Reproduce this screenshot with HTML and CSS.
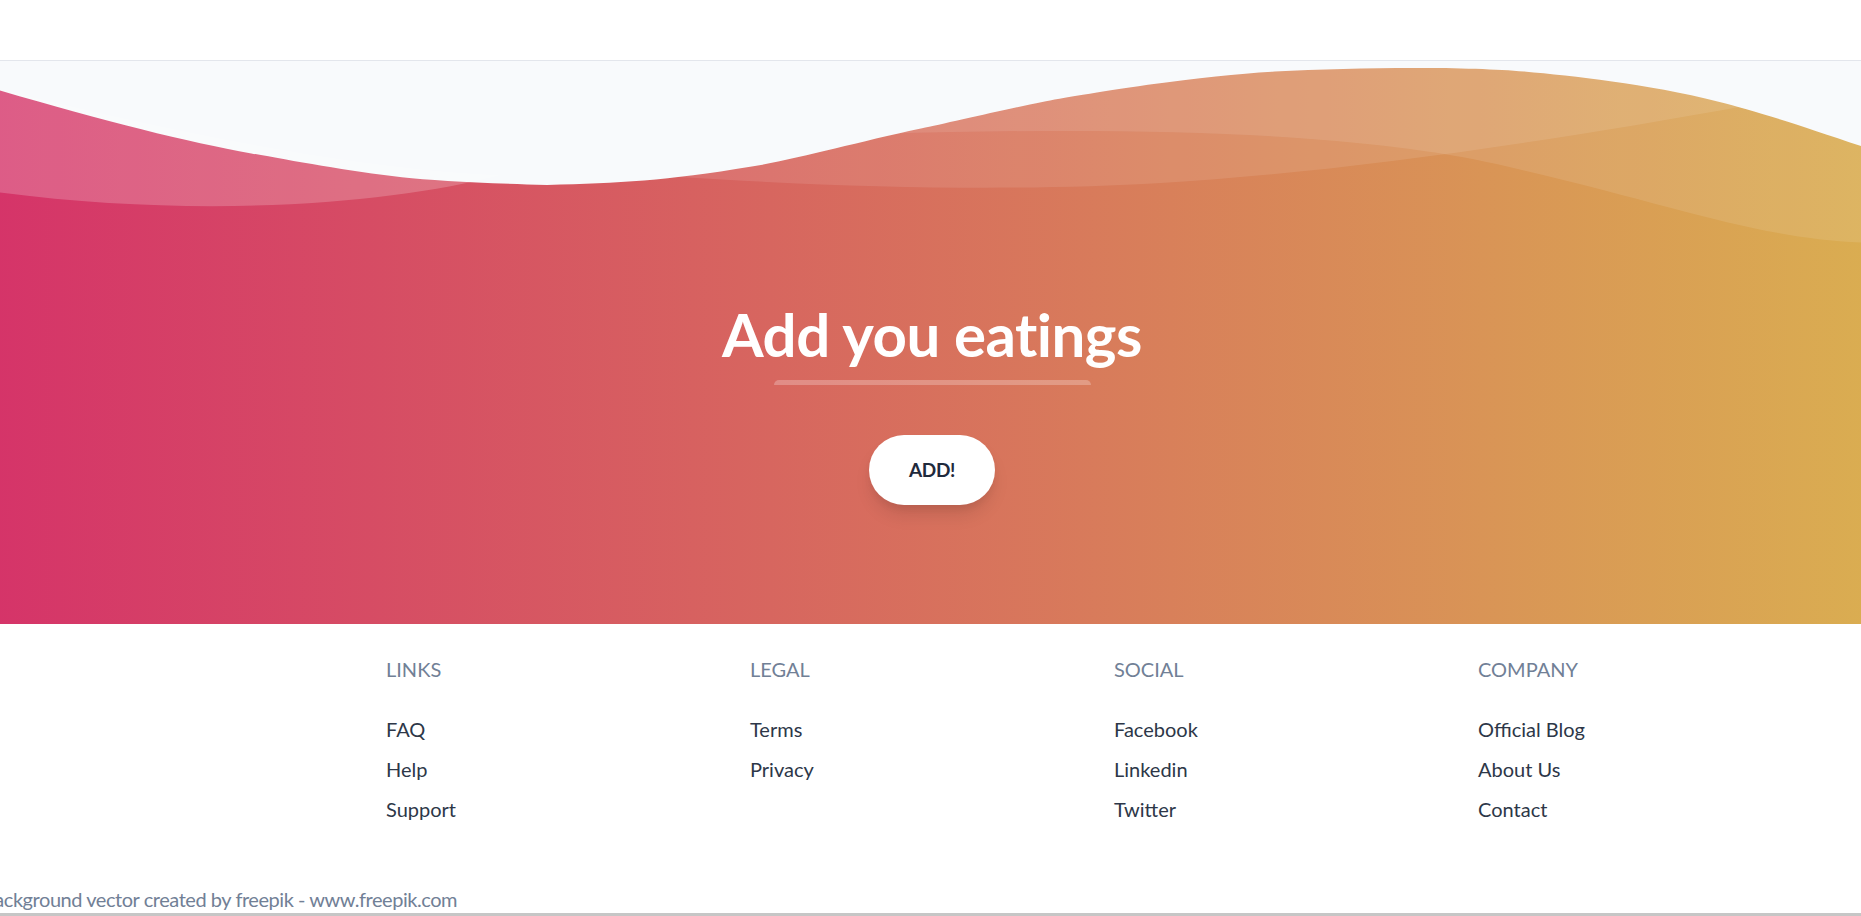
FILE: index.html
```html
<!DOCTYPE html>
<html lang="en">
<head>
<meta charset="utf-8">
<title>Add you eatings</title>
<link rel="stylesheet" href="styles.css">
</head>
<body>
<div class="page">
  <header class="nav"></header>
  <main class="cta-area">
    <svg class="wave" viewBox="0 0 1439 147" preserveAspectRatio="none" xmlns="http://www.w3.org/2000/svg">
      <g stroke="none" stroke-width="1" fill="none" fill-rule="evenodd">
        <g transform="translate(-1, -14)" fill-rule="nonzero">
          <g fill="#f8fafc">
            <path d="M1440,84 C1383.555,64.3 1342.555,51.3 1317,45 C1259.5,30.824 1206.707,25.526 1169,22 C1129.711,18.326 1044.426,18.475 980,22 C954.25,23.409 922.25,26.742 884,32 C845.122,37.787 818.455,42.121 804,45 C776.833,50.41 728.136,61.77 713,65 C660.023,76.309 621.544,87.729 584,94 C517.525,105.104 484.525,106.438 429,108 C379.49,106.484 342.823,104.484 319,102 C278.571,97.783 231.737,88.736 205,84 C154.629,75.076 86.296,57.743 0,32 L0,0 L1440,0 L1440,84 Z"/>
          </g>
          <g transform="translate(1, 15)" fill="#FFFFFF">
            <g transform="translate(719.5, 68.5) rotate(-180) translate(-719.5, -68.5)">
              <path d="M0,0 C90.7283404,0.927527913 147.912752,27.187927 291.910178,59.9119003 C387.908462,81.7278826 543.605069,89.334785 759,82.7326078 C469.336065,156.254352 216.336065,153.6679 0,75 L0,0 Z" opacity="0.1"/>
              <path d="M100,104.708498 C277.413333,72.2345949 426.147877,52.5246657 546.203633,45.5787101 C666.259389,38.6327546 810.524845,41.7979068 979,55.0741668 C931.069965,56.122511 810.303266,74.8455141 616.699903,111.243748 C423.096539,147.641981 250.863238,145.463483 100,104.708498 Z" opacity="0.1"/>
              <path d="M1046,51.6521276 C1130.83045,29.328812 1279.08318,17.607883 1439,40.1656806 L1439,120 C1271.17211,77.9435312 1140.17211,55.1609071 1046,51.6521276 Z" opacity="0.2"/>
            </g>
          </g>
        </g>
      </g>
    </svg>
    <section class="cta">
      <h1 class="cta-title">Add you eatings</h1>
      <div class="cta-bar"></div>
      <button class="cta-btn" type="button">ADD!</button>
    </section>
  </main>
  <footer class="footer">
    <div class="footer-inner">
      <div class="col"></div>
      <div class="col">
        <p class="col-title">Links</p>
        <ul class="col-list">
          <li><a href="#">FAQ</a></li>
          <li><a href="#">Help</a></li>
          <li><a href="#">Support</a></li>
        </ul>
      </div>
      <div class="col">
        <p class="col-title">Legal</p>
        <ul class="col-list">
          <li><a href="#">Terms</a></li>
          <li><a href="#">Privacy</a></li>
        </ul>
      </div>
      <div class="col">
        <p class="col-title">Social</p>
        <ul class="col-list">
          <li><a href="#">Facebook</a></li>
          <li><a href="#">Linkedin</a></li>
          <li><a href="#">Twitter</a></li>
        </ul>
      </div>
      <div class="col">
        <p class="col-title">Company</p>
        <ul class="col-list">
          <li><a href="#">Official Blog</a></li>
          <li><a href="#">About Us</a></li>
          <li><a href="#">Contact</a></li>
        </ul>
      </div>
    </div>
  </footer>
  <div class="credit"><a href="#">Background vector created by freepik - www.freepik.com</a></div>
  <div class="hbar"></div>
</div>
</body>
</html>
```

FILE: styles.css
```css
html, body {
  margin: 0;
  padding: 0;
  height: 916px;
  overflow: hidden;
  background: #ffffff;
}

.page {
  width: 1900px;
  margin-left: -18px;
  font-family: "Source Sans Pro", Lato, "Open Sans", sans-serif;
  font-size: 20px;
  line-height: 30px;
}

.nav {
  height: 61px;
  box-sizing: border-box;
  background: #ffffff;
  border-bottom: 1px solid #e3e6ec;
}

.cta-area {
  background: linear-gradient(90deg, #d53369 0%, #daae51 100%);
}

.wave {
  display: block;
  width: 1900px;
  height: 194px;
}

.cta {
  display: flex;
  flex-direction: column;
  align-items: center;
  padding: 30px 0 89px;
  text-align: center;
}

.cta-title {
  margin: 12px 0 8px;
  font-size: 60px;
  line-height: 75px;
  font-weight: 700;
  letter-spacing: -0.5px;
  color: #ffffff;
}

.cta-bar {
  width: 317px;
  height: 5px;
  margin-bottom: 20px;
  background: rgba(255, 255, 255, 0.25);
  border-radius: 5px 5px 0 0;
}

.cta-btn {
  margin: 30px 0;
  height: 70px;
  padding: 0 40px;
  border: 0;
  border-radius: 9999px;
  background: #ffffff;
  color: #1f2a3c;
  font-family: inherit;
  font-size: 19px;
  font-weight: 700;
  letter-spacing: -0.3px;
  line-height: 30px;
  box-shadow: 0 12px 19px -4px rgba(0, 0, 0, 0.12), 0 5px 8px -2px rgba(0, 0, 0, 0.06);
}

.footer {
  background: #ffffff;
  padding: 30px 40px;
}

.footer-inner {
  display: flex;
}

.col {
  flex: 1;
}

.col-title {
  margin: 0 0 30px;
  text-transform: uppercase;
  color: #718096;
}

.col-list {
  list-style: none;
  margin: 0 0 30px;
  padding: 0;
}

.col-list li {
  margin-top: 10px;
}

.col-list a {
  color: #2d3748;
  text-decoration: none;
}

.credit {
  height: 29px;
  overflow: visible;
  letter-spacing: -0.45px;
}

.credit a {
  color: #718096;
  text-decoration: none;
}

.hbar {
  height: 3px;
  margin-left: 18px;
  width: 1861px;
  background: #c6c6c6;
}
```
